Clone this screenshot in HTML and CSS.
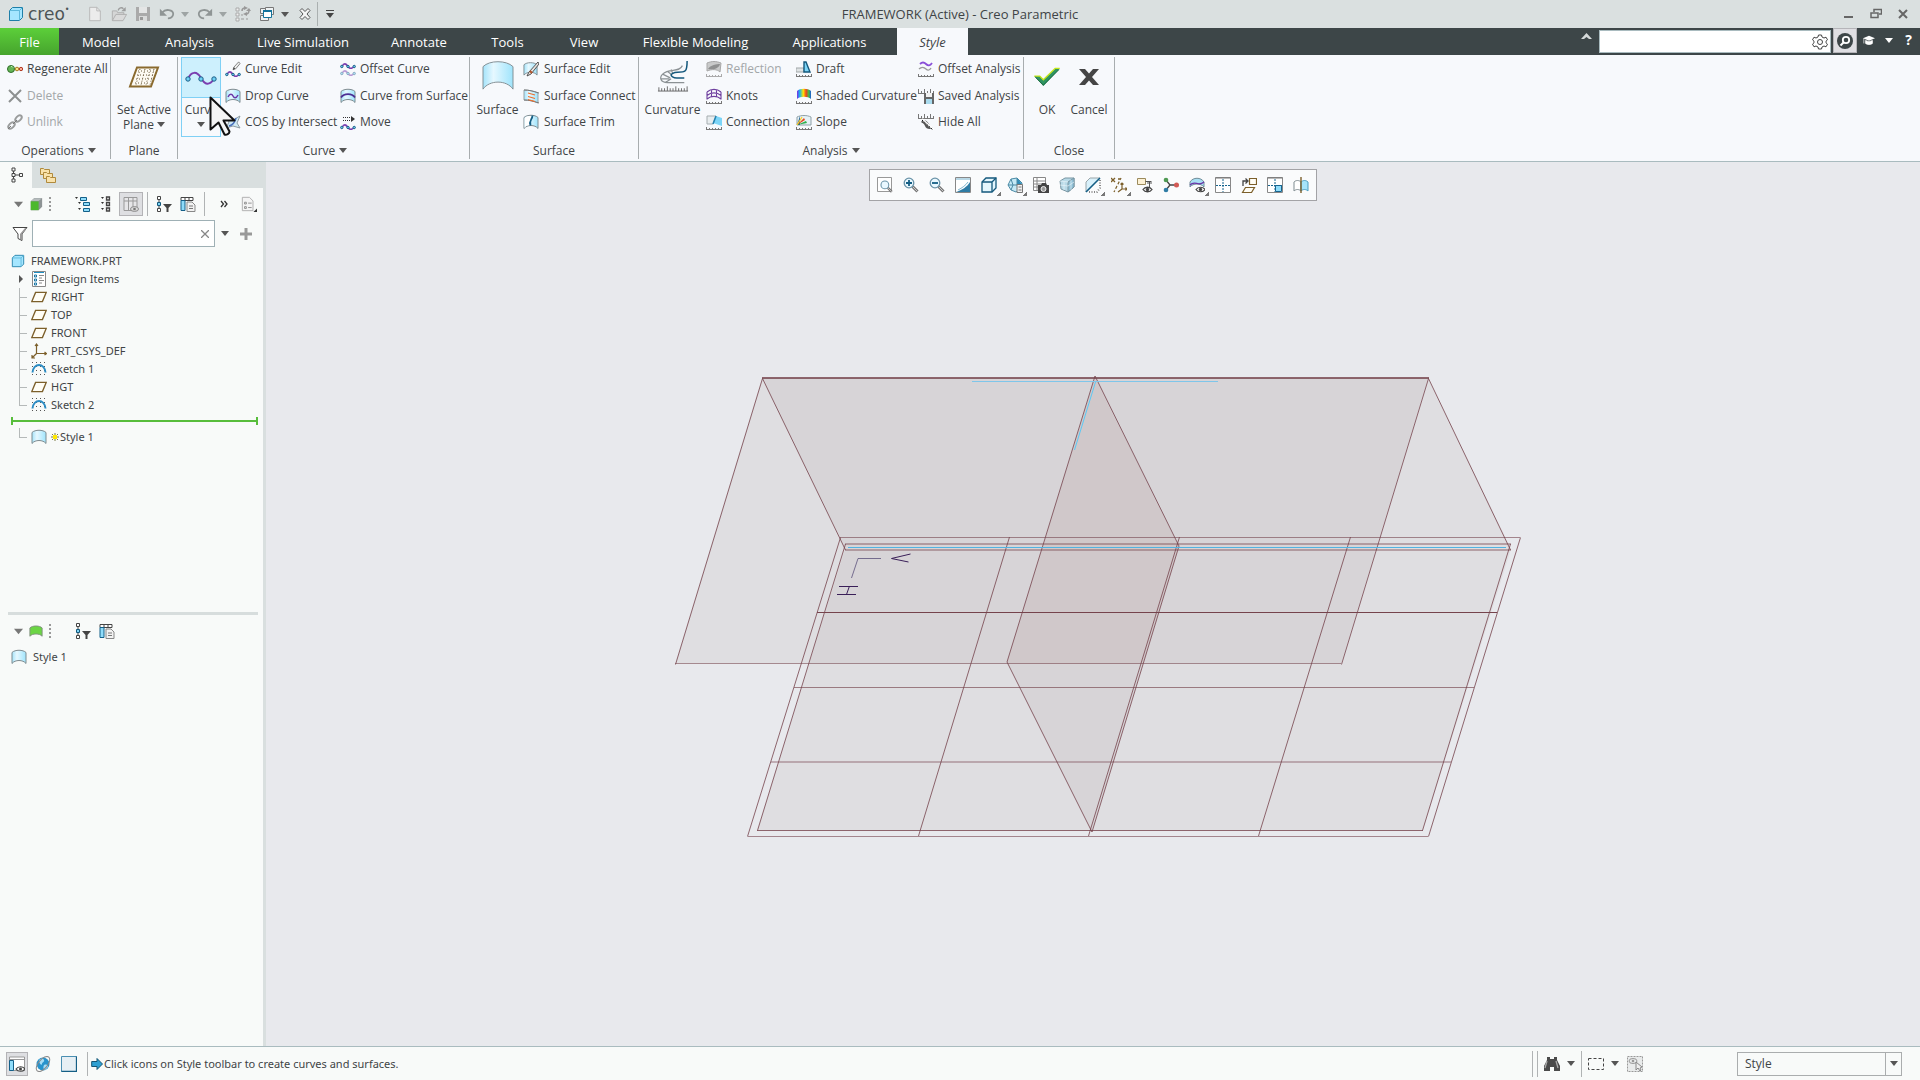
FILE: index.html
```html
<!DOCTYPE html>
<html lang="en">
<head>
<meta charset="utf-8">
<title>FRAMEWORK (Active) - Creo Parametric</title>
<link rel="stylesheet" href="styles.css">
</head>
<body>
<svg class="sprite" aria-hidden="true">
  <defs>
    <linearGradient id="sky" x1="0" x2="1"><stop offset="0" stop-color="#a5e4fb"/><stop offset=".35" stop-color="#e6f8ff"/><stop offset="1" stop-color="#9fe4fc"/></linearGradient>
    <linearGradient id="rainbow" x1="0" x2="1"><stop offset="0" stop-color="#7d2be8"/><stop offset=".2" stop-color="#16b7e8"/><stop offset=".45" stop-color="#ffe600"/><stop offset=".65" stop-color="#f4411e"/><stop offset=".85" stop-color="#39c24a"/><stop offset="1" stop-color="#1b52e0"/></linearGradient>
  </defs>
  <symbol id="caret" viewBox="0 0 8 5"><path d="M0 0h8L4 5z" fill="currentColor"/></symbol>
  <symbol id="cube" viewBox="0 0 16 16"><path d="M1.500 4.500l3-3h10v10l-3 3h-10z" fill="#a5e6ff" stroke="#1f7fa8"/><path d="M1.500 4.500h10v10M11.500 4.500l3-3" fill="none" stroke="#5fb9dc"/></symbol>
  <symbol id="greencube" viewBox="0 0 16 16"><path d="M2 5l4-4h9v10l-4 4H2z" fill="#8d9394"/><path d="M2 5h9v10H2z" fill="#4db82d"/><path d="M2 4.500l4-3h9l-4 3z" fill="#b5bbbc"/></symbol>
  <symbol id="new" viewBox="0 0 16 18"><path d="M2 1.500h8l4 4v11H2z" fill="#ececec" stroke="#b4b4b4"/><path d="M10 1.500v4h4" fill="none" stroke="#b4b4b4"/></symbol>
  <symbol id="open" viewBox="0 0 18 18"><path d="M1.500 16V5.500h5l1 2h7V10" fill="#d5d6d6" stroke="#adadad"/><path d="M1.500 16.500l4-7h12l-4 7z" fill="#dadada" stroke="#adadad"/><path d="M8 5c1-3 4-4 6-2" fill="none" stroke="#9d9d9d" stroke-width="1.500"/><path d="M16.500 1v5h-5z" fill="#9d9d9d"/></symbol>
  <symbol id="save" viewBox="0 0 16 16"><path d="M1 1h14v14H1z" fill="#aaa"/><path d="M4 1h8v6H4z" fill="#e4e5e5"/><path d="M4 10h8v5H4z" fill="#d9dada"/><path d="M5 11h3v3H5z" fill="#999"/></symbol>
  <symbol id="undo" viewBox="0 0 18 16"><path d="M4 6c3-4 12-3 12 2 0 3-3 5-6 5" fill="none" stroke="#8f9595" stroke-width="2"/><path d="M1 2v8h8z" fill="#8f9595"/></symbol>
  <symbol id="redo" viewBox="0 0 18 16"><path d="M14 6C11 2 2 3 2 8c0 3 3 5 6 5" fill="none" stroke="#8f9595" stroke-width="2"/><path d="M17 2v8H9z" fill="#8f9595"/></symbol>
  <symbol id="regen" viewBox="0 0 16 16"><path d="M1 2h3v3H1zM1 7h3v3H1zM1 12h3v3H1z" fill="#eee" stroke="#aaa"/><path d="M6 13h3M6 9h2M11 13h2" stroke="#999"/><path d="M7 5c0-2 1-3 3-3M14 4c0 3-1 4-3 4" fill="none" stroke="#999" stroke-width="1.500"/><path d="M9 0l4 2-4 2zM12 6l-4 2 4 2zM11 5l3-3 2 3z" fill="#999"/></symbol>
  <symbol id="windows" viewBox="0 0 16 16"><path d="M6.500 1.500h8v7h-8z" fill="#eef2f3" stroke="#777"/><path d="M1.500 2.500h5v5h-5zM1.500 9.500h8v5h-8z" fill="#eef2f3" stroke="#777"/><path d="M4.500 5h8v6.500h-8z" fill="#fff" stroke="#13739c"/><path d="M4 4h9v2H4z" fill="#13739c"/></symbol>
  <symbol id="xbox" viewBox="0 0 14 14"><path d="M2 3.500L4 1.500 7 4.500 10 1.500 12 3.500 9 7l3 3.500-2 2-3-3-3 3-2-2L5 7z" fill="#f4f4f4" stroke="#555"/></symbol>
  <symbol id="ruler" viewBox="0 0 16 4"><path d="M0 3.500h16M.5 1v3M3.500 2v2M6.500 2v2M9.500 2v2M12.500 2v2M15.500 1v3" stroke="#777" fill="none"/></symbol>
  <symbol id="beads" viewBox="0 0 16 16"><circle cx="4" cy="8" r="3.500" fill="#64b555" stroke="#2f6e28"/><path d="M4 5.500a2 2 0 0 1 2 1" stroke="#c5efbb" fill="none"/><circle cx="10" cy="8" r="1.800" fill="#fbe28a" stroke="#a97d1d"/><circle cx="14" cy="8" r="1.700" fill="#f9ab95" stroke="#b23a22"/></symbol>
  <symbol id="del" viewBox="0 0 16 16"><path d="M2 2l12 12M14 2L2 14" stroke="#8d9090" stroke-width="2"/></symbol>
  <symbol id="unlink" viewBox="0 0 16 16"><g fill="none" stroke="#9a9c9c" stroke-width="2"><ellipse cx="11.500" cy="4.500" rx="3.800" ry="2.300" transform="rotate(-45 11.500 4.500)"/><ellipse cx="4.500" cy="11.500" rx="3.800" ry="2.300" transform="rotate(-45 4.500 11.500)"/></g><path d="M6 10l4-4M1 15l3-3" stroke="#777"/></symbol>
  <symbol id="plane" viewBox="0 0 32 24"><path d="M9 2.500h21L23 21.500H2z" fill="#fdfaf2" stroke="#8a6a2e" stroke-width="2"/><path d="M10 6h16M9 10h16M8 14h16M7 18h15M12 4l-4 16M17 4l-4 16M22 4l-4 16M26 4l-4 16" stroke="#6b5a3a" stroke-dasharray="1 2" fill="none"/></symbol>
  <symbol id="curve" viewBox="0 0 32 14"><path d="M3 8C6 0 12 0 16 7s8 8 13 1" fill="none" stroke="#7b3fb0" stroke-width="2"/><g fill="#6fd0f5" stroke="#1c5e86"><circle cx="3" cy="8" r="2.200"/><circle cx="16" cy="8" r="2.200"/><circle cx="29" cy="8" r="2.200"/></g></symbol>
  <symbol id="wave" viewBox="0 0 16 6"><path d="M2 3.500c2-4 4-3 6 0s4 2 6 0" fill="none" stroke="#7b3fb0" stroke-width="1.600"/><g fill="#6fd0f5" stroke="#1c5e86"><circle cx="1.800" cy="3.500" r="1.200"/><circle cx="8" cy="3.500" r="1.200"/><circle cx="14.200" cy="3.500" r="1.200"/></g></symbol>
  <symbol id="surf" viewBox="0 0 16 16"><path d="M1 3.500C4 .5 12 .5 15 3.500V14.500C12 10.500 4 10.500 1 14.500z" fill="url(#sky)" stroke="#7f8b90"/></symbol>
  <symbol id="pen" viewBox="0 0 16 16"><path d="M14.500 1L9 7l-1 3 3-1 5-6z" fill="#eee" stroke="#555" stroke-width=".8"/><path d="M8 10l1-3 1.500 1.500z" fill="#333"/></symbol>
  <symbol id="curveedit" viewBox="0 0 16 16"><use href="#wave" y="10" width="16" height="6"/><use href="#pen" width="16" height="14"/></symbol>
  <symbol id="drop" viewBox="0 0 16 16"><use href="#surf" width="16" height="16"/><path d="M3 9c2-4 4-3 5-1s3 3 5-1" fill="none" stroke="#6b35a8" stroke-width="1.500"/></symbol>
  <symbol id="cos" viewBox="0 0 16 16"><path d="M1 2l7 4 7-4-3 7 3 5-7-2-7 2 3-6z" fill="#cfeaf5" stroke="#8d9ba1"/><path d="M4 12c4-1 6-4 7-8" fill="none" stroke="#4b72bd" stroke-width="1.500"/></symbol>
  <symbol id="offset" viewBox="0 0 16 16"><use href="#wave" y="2" width="16" height="6"/><use href="#wave" y="9" width="16" height="6" opacity=".5"/></symbol>
  <symbol id="fromsurf" viewBox="0 0 16 16"><use href="#surf" width="16" height="16"/><path d="M1 9.500C4 5 12 5 15 9.500" fill="none" stroke="#4c2f94" stroke-width="1.800"/></symbol>
  <symbol id="move" viewBox="0 0 16 16"><use href="#wave" y="10" width="16" height="6"/><path d="M3 3.500h8M3 6.500h8" stroke="#333" stroke-dasharray="1 1"/><path d="M11 2l4 3-4 3z" fill="#333"/></symbol>
  <symbol id="bigsurf" viewBox="0 0 34 32"><path d="M1 6C8-1 26-1 33 6V30C26 20 8 20 1 30z" fill="url(#sky)" stroke="#7f8b90"/></symbol>
  <symbol id="surfedit" viewBox="0 0 16 16"><use href="#surf" width="15" height="16"/><path d="M15 1L6 11l-2 4 4-2L16 3z" fill="#e9e3df" stroke="#444" stroke-width=".9"/><path d="M7 10l2 2" stroke="#b3532a" stroke-width="2"/></symbol>
  <symbol id="surfconn" viewBox="0 0 16 16"><path d="M1 2c5 0 9 1 14 3v10C10 13 6 12 1 12z" fill="url(#sky)" stroke="#98a3a7"/><path d="M1 2c5 0 9 1 15 3M1 12c5 0 9 1 15 3" stroke="#777" fill="none"/><path d="M5 5l7 2M5 8.500l7 2M5 11.500l7 2" stroke="#ef6e2a" stroke-width="1.300"/></symbol>
  <symbol id="surftrim" viewBox="0 0 16 16"><use href="#surf" width="16" height="16"/><path d="M1.500 4c2-2 4-2 8-2-1 4-3 4-2 9-3 0-5 1-6 3z" fill="#fff"/><path d="M9.500 1.500c0 4-4 5-2 10" fill="none" stroke="#145e85" stroke-width="1.800"/></symbol>
  <symbol id="curvature" viewBox="0 0 32 34"><g fill="none" stroke="#8b9194" stroke-width="1.300"><path d="M26 6c-4 8-14 2-21 9-4 4-2 9 5 9h18M5 15l8 4M3 20l9 0M10 12l5 4M14 10l2 5M8 24l6-4"/></g><path d="M31 1c0 12-2 12-10 12-5 0-7 2-7 3s2 3 6 3h8" fill="none" stroke="#14587c" stroke-width="1.600"/><path d="M0 33h32M1 29v4M4 30v3M7 30v3M10 28v5M13 30v3M16 30v3M19 28v5M22 30v3M25 30v3M28 30v3M31 28v5" stroke="#666" fill="none"/></symbol>
  <symbol id="reflection" viewBox="0 0 16 16"><path d="M1 2c5-2 9-2 14 0l-1 9c-3-3-8-3-13-1z" fill="#c9caca" stroke="#a7a7a7"/><path d="M2 8c2-4 9-5 12-5-1 4-5 6-12 5z" fill="#8f9090"/><use href="#ruler" y="12" width="16" height="4" opacity=".6"/></symbol>
  <symbol id="knots" viewBox="0 0 16 16"><path d="M1 4c4-3.500 10-3.500 14 0M1 7.500C5 4 11 4 15 7.500M1 11C5 7.500 11 7.500 15 11M1 4v7.500M5.500 1.500v8M10.500 1.500v8M15 4v7.500" fill="none" stroke="#6e3f9e" stroke-width="1.100"/><use href="#ruler" y="12" width="16" height="4"/></symbol>
  <symbol id="connection" viewBox="0 0 16 16"><path d="M1 2h9L7 10H1z" fill="#e8edef" stroke="#a5adb0"/><path d="M10 2l6 2v8L7 9z" fill="#7dd5f7"/><path d="M10 2L7 10" stroke="#2582b0" stroke-width="1.500"/><use href="#ruler" y="12" width="16" height="4"/></symbol>
  <symbol id="draft" viewBox="0 0 16 16"><path d="M0 7h8v4H0z" fill="#dfe3e4" stroke="#a1a7a9"/><path d="M8 1h2l4 10H8z" fill="#7dd5f7" stroke="#14587c" stroke-width="1.400"/><use href="#ruler" y="12" width="16" height="4"/></symbol>
  <symbol id="shaded" viewBox="0 0 16 16"><path d="M1 3c3-3 11-3 14 0v8c-3-3-11-3-14 0z" fill="url(#rainbow)"/><use href="#ruler" y="12" width="16" height="4"/></symbol>
  <symbol id="slope" viewBox="0 0 16 16"><path d="M1 3c4-2 10-2 14 0v8H1z" fill="#e5f2f7" stroke="#8fa0a7"/><path d="M1 11L4 2v9z" fill="#1a5e9c"/><path d="M1 11l7-7 1 2z" fill="#e8481f"/><path d="M1 11l9-4 1 2z" fill="#2eaf4d"/><path d="M1 11l5-8" stroke="#ffd028" stroke-width="1.300"/><use href="#ruler" y="12" width="16" height="4"/></symbol>
  <symbol id="offan" viewBox="0 0 16 16"><path d="M2 3c2-2 4-2 6 0s4 2 6-1" fill="none" stroke="#8a4fd8" stroke-width="1.800"/><path d="M1 8c2-2 5-2 7 0s4 1 5-1" fill="none" stroke="#999" stroke-width="1.300"/><use href="#ruler" y="12" width="16" height="4"/></symbol>
  <symbol id="rulertop" viewBox="0 0 16 5"><path d="M0 4.500h16M.5 0v5M3.500 2v3M6.500 0v5M9.500 2v3M12.500 0v5M15.500 2v3" stroke="#777" fill="none"/></symbol>
  <symbol id="savean" viewBox="0 0 16 16"><use href="#rulertop" y="1" width="16" height="5"/><path d="M6 5h10v11H6z" fill="#666"/><path d="M8 5h6v4H8z" fill="#f2f2f2"/><path d="M8 11h6v5H8z" fill="#a9dbee"/></symbol>
  <symbol id="hide" viewBox="0 0 16 16"><use href="#rulertop" width="16" height="5"/><path d="M3 8c2-3 6-2 8 2s3 3 4 4c-3 2-7 1-8-2S4 9 3 8z" fill="#555"/><path d="M4 5l12 11" stroke="#fff" stroke-width="2"/><path d="M4 6l11 10" stroke="#111" stroke-dasharray="2 1"/></symbol>
  <symbol id="ok" viewBox="0 0 28 22"><path d="M0 10h6l4 4L23 2h5L10 21z" fill="#2f9462"/><path d="M0 10h6l4 4L23 1.500h5" fill="none" stroke="#c4e617" stroke-width="1.500"/><path d="M1 11l9 9L27 3" fill="none" stroke="#166238"/></symbol>
  <symbol id="cancel" viewBox="0 0 20 16"><path d="M0 0h6l4 4.500L14 0h6l-7 8 7 8h-6l-4-4.500L6 16H0l7-8z" fill="#454545"/></symbol>
  <symbol id="gear" viewBox="0 0 16 16"><path d="M6.500 1h3l.5 2 2 1 2-.8 1.500 2.600L14 7.200v1.600l1.500 1.400-1.500 2.600-2-.8-2 1-.5 2h-3L6 13l-2-1-2 .8L.5 10.200 2 8.800V7.200L.5 5.800 2 3.200 4 4l2-1z" fill="#fff" stroke="#444"/><circle cx="8" cy="8" r="2.500" fill="#fff" stroke="#444"/></symbol>
  <symbol id="find" viewBox="0 0 16 16"><circle cx="8" cy="8" r="8" fill="#3d4648"/><circle cx="9" cy="7" r="3.200" fill="none" stroke="#fff" stroke-width="1.800"/><path d="M3.500 12.500L7 9" stroke="#fff" stroke-width="2"/></symbol>
  <symbol id="grad" viewBox="0 0 14 12"><path d="M7 1l7 3-7 3-7-3z" fill="#fff"/><path d="M3 6.500V10c2 1.800 6 1.800 8 0V6.500L7 8zM1 4v6" fill="#fff" stroke="#fff" stroke-width=".8"/></symbol>
  <symbol id="treetab" viewBox="0 0 14 16"><path d="M2 1h3v3H2zM2 6.500h3v3H2zM2 12h3v3H2zM9.500 6.500h3v3h-3zM3.500 4v2.500M3.500 9.500V12M5 8h4.500" fill="none" stroke="#444"/></symbol>
  <symbol id="folders" viewBox="0 0 16 16"><g fill="#f9e2ab" stroke="#b08a3c"><path d="M.5 1.500h3l1 1h5v5h-9z"/><path d="M3.500 5.500h3l1 1h5v5h-9z"/><path d="M6.500 9.500h3l1 1h5v5h-9z"/></g></symbol>
  <symbol id="expand" viewBox="0 0 16 16"><path d="M0 1h3L1.500 3zM3 6h3L4.500 8zM3 12h3l-1.500 2z" fill="#333"/><path d="M5.500 1.500h6v3h-6zM8.500 6.500h6v3h-6zM8.500 12.500h6v3h-6z" fill="#8fdcfa" stroke="#146089"/></symbol>
  <symbol id="collapse" viewBox="0 0 16 16"><path d="M2 1h3L3.500 3zM2 6h3L3.500 8zM2 12h3l-1.500 2z" fill="#333"/><path d="M7.500 1h3v3h-3zM7.500 6.500h3v3h-3zM7.500 12h3v3h-3z" fill="#ddd" stroke="#444" stroke-width="1.300"/></symbol>
  <symbol id="cols" viewBox="0 0 16 16"><path d="M1 1.500h13v13H1zM1 5h13M5.500 1.500v13M10 1.500v13" fill="#e6e6e8" stroke="#999"/><ellipse cx="11.500" cy="13" rx="4" ry="2.400" fill="#ddd" stroke="#888"/><circle cx="11.500" cy="13" r="1.300" fill="#777"/></symbol>
  <symbol id="treefilter" viewBox="0 0 16 16"><path d="M1.500 .5h3v3h-3zM1.500 12.500h3v3h-3zM3 3.500v9" fill="#fff" stroke="#444"/><path d="M1.500 6.500h3v3h-3z" fill="#7dd5f7" stroke="#14587c"/><path d="M7 8h9l-3.500 4v4h-2v-4z" fill="#444"/></symbol>
  <symbol id="treecols" viewBox="0 0 16 16"><path d="M1 1.500h12v3H1zM5 1.500v3M9 1.500v3" fill="#fff" stroke="#444"/><path d="M1 4.500h4v10H1z" fill="#8fdcfa" stroke="#146089"/><path d="M7 6h5l3 3v6.500H7z" fill="#f2f2f2" stroke="#888"/><path d="M9 10h4M9 12.500h4" stroke="#777"/></symbol>
  <symbol id="page" viewBox="0 0 18 18"><path d="M1.500 1.500h8l4 4v11h-12z" fill="#f4f4f4" stroke="#aaa"/><path d="M4 7h2v2H4zM4 12h2v2H4zM8 8h4M8 13h4" fill="none" stroke="#888"/><path d="M18 14v4h-4z" fill="#333"/></symbol>
  <symbol id="funnel" viewBox="0 0 16 16"><path d="M1 1.500h14L10 8v6.500l-4-2V8z" fill="#fff" stroke="#444"/><path d="M8 8l5-6h2l-5 6v6l-2-1z" fill="#999"/></symbol>
  <symbol id="plus" viewBox="0 0 12 12"><path d="M4.500 0h3v4.500H12v3H7.500V12h-3V7.500H0v-3h4.500z" fill="#999"/></symbol>
  <symbol id="design" viewBox="0 0 14 16"><path d="M.5 .5h13v15H.5z" fill="#fff" stroke="#888"/><path d="M2 1.500h10" stroke="#1f8fc4"/><path d="M2.500 4h2v2h-2zM2.500 8h2v2h-2zM2.500 12h2v2h-2z" fill="#fff" stroke="#1976a5"/><path d="M7 4.500h5M7 7h3M7 9.500h5M7 12h3" stroke="#888"/></symbol>
  <symbol id="datum" viewBox="0 0 14 10"><path d="M4 1h9.300L10 9H.7z" fill="#fffdf5" stroke="#7c5f2a" stroke-width="1.200"/></symbol>
  <symbol id="csys" viewBox="0 0 16 16"><path d="M5.500 1v9.500h10M5.500 10.500L1 15M4 3l1.500-2L7 3M13.500 9l2 1.500-2 1.500M1 12v3h3" fill="none" stroke="#7c5f2a" stroke-width="1.200"/></symbol>
  <symbol id="sketch" viewBox="0 0 16 14"><path d="M1 .5h14M1 4.500h14M1 8.500h14M1 12.500h14" stroke="#555" stroke-dasharray="1 3"/><path d="M1.500 10.500c1-10 12-10 13 0" fill="none" stroke="#2b8cc4" stroke-width="2"/></symbol>
  <symbol id="star" viewBox="0 0 8 8"><path d="M4 0v8M0 4h8M1 1l6 6M7 1L1 7" stroke="#5b5b1c" stroke-width=".8"/><path d="M2 2h4v4H2z" fill="#ffe800"/></symbol>
  <symbol id="mag" viewBox="0 0 16 16"><path d="M9.500 9.500l5 5" stroke="#777" stroke-width="3"/><path d="M10 10l4.500 4.500" stroke="#ccc"/><circle cx="6" cy="6" r="4.800" fill="#e9f8ff" stroke="#6a93a8" stroke-width="1.300"/></symbol>
  <symbol id="refit" viewBox="0 0 16 16"><path d="M.5 .5h14v14H.5z" fill="#fff" stroke="#999"/><use href="#mag" x="3" y="3" width="13" height="13"/></symbol>
  <symbol id="zin" viewBox="0 0 16 16"><use href="#mag" width="16" height="16"/><path d="M3 6h6M6 3v6" stroke="#145e85" stroke-width="1.800"/></symbol>
  <symbol id="zout" viewBox="0 0 16 16"><use href="#mag" width="16" height="16"/><path d="M3 6h6" stroke="#145e85" stroke-width="1.800"/></symbol>
  <symbol id="repaint" viewBox="0 0 16 16"><path d="M.5 .5h15v15H.5z" fill="#fff" stroke="#888"/><path d="M1 15c6-2 11-5 14-10v10z" fill="#2f7ca5"/><path d="M1 1h14v2H1z" fill="#b9d8e6"/><path d="M3 13c4-2 8-5 10-8" stroke="#7fb6d0" fill="none"/></symbol>
  <symbol id="box3d" viewBox="0 0 16 16"><path d="M1 5l4-4h10v10l-4 4H1z" fill="#e4f6fd" stroke="#14587c" stroke-width="1.300"/><path d="M1 5h10v10M11 5l4-4" fill="none" stroke="#14587c" stroke-width="1.300"/></symbol>
  <symbol id="saved" viewBox="0 0 16 16"><path d="M4 2l6-1 5 5-1 6-5 3-5-2-3-5z" fill="#c5e9f6" stroke="#4b8aa5"/><path d="M10 1l5 6h-5z" fill="#2f8cb8"/><path d="M1 8h9V1M4 13l2-5-2-6" stroke="#4b8aa5" fill="none"/><path d="M10 7.500h5.500v8H10z" fill="#f1f1f1" stroke="#777"/><path d="M11.500 10h3M11.500 13h3" stroke="#777"/></symbol>
  <symbol id="viewmgr" viewBox="0 0 16 16"><path d="M.5 .5h12v13H.5zM.5 4h12M.5 7h12M.5 10h12M4 .5v13" fill="#fff" stroke="#888"/><path d="M5 8h3l1-2h4l1 2h2v8H5z" fill="#444"/><circle cx="10.500" cy="12" r="2.500" fill="#999" stroke="#eee"/></symbol>
  <symbol id="persp" viewBox="0 0 16 16"><path d="M1 4l5-3h9v9l-6 5-7-3z" fill="#b7d9e7" stroke="#7895a2"/><path d="M9 5l6-4v9l-6 5z" fill="#8fc0d6" stroke="#7895a2"/><path d="M1 4l8 1M5 5v8M1 8l8 1 6-4M12 3v10" fill="none" stroke="#e7f4f9" stroke-width=".7"/></symbol>
  <symbol id="section" viewBox="0 0 16 16"><path d="M1 5l4-4h10L1 15z" fill="#d9f1fb" stroke="#9aa5a9"/><path d="M4 15h8l3-4V3" fill="none" stroke="#888" stroke-dasharray="1 1.500" stroke-width="2"/><path d="M1 15L15 1" stroke="#145e85" stroke-width="1.600"/></symbol>
  <symbol id="datums" viewBox="0 0 16 16"><g stroke="#7c5f2a" fill="none" stroke-width="1.400"><path d="M0 1l4 4M4 1L0 5M10 1L3 15" stroke-width="1.300"/><path d="M10 1L3 15" stroke="#fafbfc" stroke-width="2" stroke-dasharray="2 3" stroke-dashoffset="3"/><path d="M7 2h2"/><path d="M11 6v6h5M11 12l-4 3M9.500 7.500L11 6l1.500 1.500M14.500 10.500L16 12l-1.500 1.500" stroke-width="1.200"/></g></symbol>
  <symbol id="annot" viewBox="0 0 16 16"><path d="M.5 1.500h8v6h-8z" fill="#fdf1d4" stroke="#9b8a5c"/><path d="M8.500 4.500h6M12.500 5v5M10 6l5 0" stroke="#555" fill="none"/><path d="M6 12.500c2-3 7-3 9 0-2 3-7 3-9 0z" fill="#fff" stroke="#444" stroke-width="1.300"/><circle cx="10.500" cy="12.500" r="1.700" fill="#444"/></symbol>
  <symbol id="spin" viewBox="0 0 16 16"><path d="M3 3l4 5-4 5M7 8h6" fill="none" stroke="#444" stroke-width="1.300"/><circle cx="3" cy="3" r="2.300" fill="#4f9a53"/><circle cx="3" cy="13" r="2.300" fill="#2f7ca5"/><circle cx="13.500" cy="8" r="2.500" fill="#d25b56"/></symbol>
  <symbol id="styledisp" viewBox="0 0 16 16"><path d="M1 5C4 0 12 0 15 5v5C12 6 4 6 1 10z" fill="#a8dff4" stroke="#708d99"/><path d="M1 8c5-5 8 2 14-3" fill="none" stroke="#6b35a8" stroke-width="1.300"/><path d="M7 12.500c2-3 7-3 9 0-2 3-7 3-9 0z" fill="#fff" stroke="#444" stroke-width="1.200"/><circle cx="11.500" cy="12.500" r="1.700" fill="#444"/></symbol>
  <symbol id="grid4" viewBox="0 0 16 16"><path d="M.5 .5h15v15H.5z" fill="#fff" stroke="#888"/><path d="M.5 1h15" stroke="#777"/><path d="M8 2v13M1 8.500h14" stroke="#17648e" stroke-dasharray="2 1"/></symbol>
  <symbol id="orient" viewBox="0 0 16 16"><path d="M8.500 1.500h7v6h-7zM4.500 10.500h9l-3 5h-9z" fill="#fffdf5" stroke="#7c5f2a" stroke-width="1.200"/><path d="M2 9V4h4M4.500 1.500L7 4 4.500 6.500" fill="none" stroke="#444" stroke-width="1.300"/></symbol>
  <symbol id="grid4b" viewBox="0 0 16 16"><use href="#grid4" width="16" height="16"/><path d="M8.500 8.500h6v6h-6z" fill="#8fdcfa" stroke="#17648e"/></symbol>
  <symbol id="mirror" viewBox="0 0 16 16"><path d="M8 5C6 3 3 3 1 5v9c2-2 5-2 7 0z" fill="#fff" stroke="#7f8b90"/><path d="M8 5c2-2 5-2 7 0v9c-2-2-5-2-7 0z" fill="#a5e4fb" stroke="#4b9dbf"/><path d="M8 0v16" stroke="#7c5f2a" stroke-width="1.400"/></symbol>
  <symbol id="greensurf" viewBox="0 0 16 14"><path d="M1 3.500C4 .5 12 .5 15 3.500V13C12 9.500 4 9.500 1 13z" fill="#6bd544" stroke="#7f8b80"/></symbol>
  <symbol id="nav" viewBox="0 0 16 16"><path d="M.5 1h15v13.500H.5z" fill="#fff" stroke="#999"/><path d="M.5 3.500h15" stroke="#999"/><path d="M.5 4.500h4v10h-4z" fill="#8fdcfa" stroke="#146089"/><path d="M7 13c2-3 7-3 9 0-2 3-7 3-9 0z" fill="#fff" stroke="#444" stroke-width="1.200"/><circle cx="11.500" cy="13" r="1.500" fill="#444"/></symbol>
  <symbol id="globe" viewBox="0 0 16 16"><circle cx="8" cy="8" r="6.500" fill="#2793cc"/><path d="M4 4c2-2 4-2 5 0s-2 2-2 4-3 0-3-4zM9 9c3-1 4 0 4 2l-3 3c-2-1-2-3-1-5z" fill="#a5dcf5"/><ellipse cx="8" cy="8" rx="9" ry="4.500" transform="rotate(-50 8 8)" fill="none" stroke="#888"/></symbol>
  <symbol id="blank" viewBox="0 0 16 16"><path d="M.5 .5h15v15H.5z" fill="#e6eff4" stroke="#4a8fb2"/><path d="M.5 15.500h15V.5" fill="none" stroke="#145e85" stroke-width="1.300"/></symbol>
  <symbol id="arrow" viewBox="0 0 12 12"><path d="M.7 3.500H6v-3L11.500 6 6 11.500v-3H.7z" fill="#2d9fd2" stroke="#145473"/></symbol>
  <symbol id="binoc" viewBox="0 0 16 16"><path d="M3 1h3v2h4V1h3v3l3 6v5h-6v-4H6v4H0v-5l3-6z" fill="#4a4a4a"/><path d="M3 5L1 12M12 5l2 7" stroke="#aaa" stroke-width="1.300"/></symbol>
  <symbol id="marquee" viewBox="0 0 16 12"><path d="M.5 .5h15v11H.5z" fill="none" stroke="#444" stroke-dasharray="3 2"/></symbol>
  <symbol id="pick" viewBox="0 0 16 16"><path d="M.5 .5h15v15H.5z" fill="#e9ebeb" stroke="#999" stroke-dasharray="2 1"/><ellipse cx="6" cy="5" rx="4" ry="2.500" fill="none" stroke="#999"/><circle cx="6" cy="5" r="1.300" fill="#999"/><path d="M9 6v8l2-2 2 3 1-1-1-2 2-1z" fill="#eee" stroke="#888"/></symbol>
</svg>

<header class="titlebar">
  <div class="quick">
    <svg class="i16"><use href="#cube"/></svg>
    <span class="logo">creo<sup>•</sup></span>
    <button class="qb" aria-label="New" disabled><svg class="i16"><use href="#new"/></svg></button>
    <button class="qb" aria-label="Open" disabled><svg class="i16"><use href="#open"/></svg></button>
    <button class="qb" aria-label="Save" disabled><svg class="i16"><use href="#save"/></svg></button>
    <button class="qb wide" aria-label="Undo" disabled><svg class="i16"><use href="#undo"/></svg><svg class="caret dim"><use href="#caret"/></svg></button>
    <button class="qb wide" aria-label="Redo" disabled><svg class="i16"><use href="#redo"/></svg><svg class="caret dim"><use href="#caret"/></svg></button>
    <button class="qb" aria-label="Regenerate" disabled><svg class="i16"><use href="#regen"/></svg></button>
    <button class="qb wide" aria-label="Windows"><svg class="i16"><use href="#windows"/></svg><svg class="caret"><use href="#caret"/></svg></button>
    <button class="qb" aria-label="Close window"><svg class="i14"><use href="#xbox"/></svg></button>
    <span class="qsep"></span>
    <button class="qb" aria-label="Customize"><svg class="i8" viewBox="0 0 8 8"><path d="M0 .5h8" stroke="#444"/><path d="M0 3h8L4 8z" fill="#444"/></svg></button>
  </div>
  <h1 class="title">FRAMEWORK (Active) - Creo Parametric</h1>
  <div class="winctl">
    <button aria-label="Minimize"><svg class="i12" viewBox="0 0 12 12"><path d="M1 9h9" stroke="#666" stroke-width="2"/></svg></button>
    <button aria-label="Restore"><svg class="i12" viewBox="0 0 12 12"><path d="M4 4V1.500h7.500V6H9" fill="none" stroke="#666" stroke-width="1.500"/><path d="M1 5h7v4.500H1z" fill="none" stroke="#666" stroke-width="1.500"/></svg></button>
    <button aria-label="Close"><svg class="i12" viewBox="0 0 12 12"><path d="M2 2l8 8M10 2l-8 8" stroke="#666" stroke-width="2"/></svg></button>
  </div>
</header>

<nav class="tabs">
  <div class="tablist">
    <a class="file" href="#file">File</a><a href="#model">Model</a><a href="#analysis">Analysis</a><a href="#live">Live Simulation</a><a href="#annotate">Annotate</a><a href="#tools">Tools</a><a href="#view">View</a><a href="#flex">Flexible Modeling</a><a href="#apps">Applications</a><a class="active" href="#style">Style</a>
  </div>
  <div class="finder">
    <button class="bare up" aria-label="Collapse ribbon"><svg class="i12" viewBox="0 0 12 12"><path d="M0 8l5.500-6L11 8H8L5.500 6 3 8z" fill="#d5d9d9"/></svg></button>
    <div class="search"><input type="text" aria-label="Search commands"><svg class="i16"><use href="#gear"/></svg></div>
    <button class="findbtn" aria-label="Find"><svg class="i16"><use href="#find"/></svg></button>
    <button class="bare" aria-label="Learning"><svg class="i12"><use href="#grad"/></svg><svg class="caret"><use href="#caret"/></svg></button>
    <button class="bare help" aria-label="Help">?</button>
  </div>
</nav>

<section class="ribbon">
  <div class="group g-ops">
    <div class="tools">
      <div class="col">
        <button class="cmd"><svg class="i16"><use href="#beads"/></svg>Regenerate All</button>
        <button class="cmd" disabled><svg class="i16"><use href="#del"/></svg>Delete</button>
        <button class="cmd" disabled><svg class="i16"><use href="#unlink"/></svg>Unlink</button>
      </div>
    </div>
    <div class="label">Operations <svg class="caret"><use href="#caret"/></svg></div>
  </div>
  <div class="group g-plane">
    <div class="tools">
      <button class="big"><span class="pic"><svg class="w32h24"><use href="#plane"/></svg></span><span>Set Active<br>Plane <svg class="caret"><use href="#caret"/></svg></span></button>
    </div>
    <div class="label">Plane</div>
  </div>
  <div class="group g-curve">
    <div class="tools">
      <button class="big hot"><span class="pic"><svg class="w32h14"><use href="#curve"/></svg></span><span>Curve<br><svg class="caret"><use href="#caret"/></svg></span></button>
      <div class="col">
        <button class="cmd"><svg class="i16"><use href="#curveedit"/></svg>Curve Edit</button>
        <button class="cmd"><svg class="i16"><use href="#drop"/></svg>Drop Curve</button>
        <button class="cmd"><svg class="i16"><use href="#cos"/></svg>COS by Intersect</button>
      </div>
      <div class="col">
        <button class="cmd"><svg class="i16"><use href="#offset"/></svg>Offset Curve</button>
        <button class="cmd"><svg class="i16"><use href="#fromsurf"/></svg>Curve from Surface</button>
        <button class="cmd"><svg class="i16"><use href="#move"/></svg>Move</button>
      </div>
    </div>
    <div class="label">Curve <svg class="caret"><use href="#caret"/></svg></div>
    <svg class="cursor" viewBox="0 0 28 42" aria-hidden="true"><path d="M1.500 1.500v32l8-7 6 12c2 1 5-1 5-3l-6-11h11z" fill="#f4f4f4" stroke="#111" stroke-width="2" stroke-linejoin="round"/></svg>
  </div>
  <div class="group g-surf">
    <div class="tools">
      <button class="big"><span class="pic"><svg class="w32h30"><use href="#bigsurf"/></svg></span><span>Surface</span></button>
      <div class="col">
        <button class="cmd"><svg class="i16"><use href="#surfedit"/></svg>Surface Edit</button>
        <button class="cmd"><svg class="i16"><use href="#surfconn"/></svg>Surface Connect</button>
        <button class="cmd"><svg class="i16"><use href="#surftrim"/></svg>Surface Trim</button>
      </div>
    </div>
    <div class="label">Surface</div>
  </div>
  <div class="group g-ana">
    <div class="tools">
      <button class="big"><span class="pic"><svg class="w32h32"><use href="#curvature"/></svg></span><span>Curvature</span></button>
      <div class="col">
        <button class="cmd" disabled><svg class="i16"><use href="#reflection"/></svg>Reflection</button>
        <button class="cmd"><svg class="i16"><use href="#knots"/></svg>Knots</button>
        <button class="cmd"><svg class="i16"><use href="#connection"/></svg>Connection</button>
      </div>
      <div class="col">
        <button class="cmd"><svg class="i16"><use href="#draft"/></svg>Draft</button>
        <button class="cmd"><svg class="i16"><use href="#shaded"/></svg>Shaded Curvature</button>
        <button class="cmd"><svg class="i16"><use href="#slope"/></svg>Slope</button>
      </div>
      <div class="col">
        <button class="cmd"><svg class="i16"><use href="#offan"/></svg>Offset Analysis</button>
        <button class="cmd"><svg class="i16"><use href="#savean"/></svg>Saved Analysis</button>
        <button class="cmd"><svg class="i16"><use href="#hide"/></svg>Hide All</button>
      </div>
    </div>
    <div class="label">Analysis <svg class="caret"><use href="#caret"/></svg></div>
  </div>
  <div class="group g-close">
    <div class="tools">
      <button class="big"><span class="pic"><svg class="w28h20"><use href="#ok"/></svg></span><span>OK</span></button>
      <button class="big"><span class="pic"><svg class="w20h16"><use href="#cancel"/></svg></span><span>Cancel</span></button>
    </div>
    <div class="label">Close</div>
  </div>
</section>

<main class="work">
  <aside class="side">
    <div class="sidetabs">
      <button class="on" aria-label="Model tree"><svg class="i16"><use href="#treetab"/></svg></button>
      <button aria-label="Folders"><svg class="i16"><use href="#folders"/></svg></button>
    </div>
    <div class="treebar">
      <button aria-label="Collapse section"><svg class="tri"><use href="#caret"/></svg></button>
      <svg class="i14"><use href="#greencube"/></svg><span class="grip"></span>
      <button class="gapl" aria-label="Expand all"><svg class="i16"><use href="#expand"/></svg></button>
      <button aria-label="Collapse all"><svg class="i16"><use href="#collapse"/></svg></button>
      <button class="pressed" aria-label="Show columns"><svg class="i16"><use href="#cols"/></svg></button>
      <span class="vsep"></span>
      <button aria-label="Tree filters"><svg class="i16"><use href="#treefilter"/></svg></button>
      <button aria-label="Tree columns"><svg class="i16"><use href="#treecols"/></svg></button>
      <span class="vsep"></span>
      <button class="more" aria-label="More"><svg class="i8" viewBox="0 0 8 8"><path d="M1 1l2.500 3L1 7M4.500 1L7 4 4.500 7" fill="none" stroke="#333" stroke-width="1.300"/></svg></button>
      <button class="settings" aria-label="Settings"><svg class="i16"><use href="#page"/></svg></button>
    </div>
    <div class="filter">
      <svg class="i16"><use href="#funnel"/></svg>
      <div class="box"><input type="text" aria-label="Filter tree"><button aria-label="Clear"><svg class="i8" viewBox="0 0 8 8"><path d="M0 0l8 8M8 0L0 8" stroke="#888" stroke-width="1.300"/></svg></button></div>
      <button aria-label="Filter options"><svg class="caret"><use href="#caret"/></svg></button>
      <button aria-label="Add"><svg class="i12"><use href="#plus"/></svg></button>
    </div>
    <ul class="tree">
      <li class="root"><svg class="i14"><use href="#cube"/></svg>FRAMEWORK.PRT</li>
      <li><span class="twig open"><svg class="i8" viewBox="0 0 8 8"><path d="M0 0l4 4-4 4z" fill="#555"/></svg></span><svg class="i16"><use href="#design"/></svg>Design Items</li>
      <li><span class="twig"></span><svg class="i16 flat"><use href="#datum"/></svg>RIGHT</li>
      <li><span class="twig"></span><svg class="i16 flat"><use href="#datum"/></svg>TOP</li>
      <li><span class="twig"></span><svg class="i16 flat"><use href="#datum"/></svg>FRONT</li>
      <li><span class="twig"></span><svg class="i16"><use href="#csys"/></svg>PRT_CSYS_DEF</li>
      <li><span class="twig"></span><svg class="i16"><use href="#sketch"/></svg>Sketch 1</li>
      <li><span class="twig"></span><svg class="i16 flat"><use href="#datum"/></svg>HGT</li>
      <li><span class="twig last"></span><svg class="i16"><use href="#sketch"/></svg>Sketch 2</li>
    </ul>
    <div class="insert"></div>
    <ul class="tree after">
      <li><span class="twig last"></span><svg class="i16"><use href="#surf"/></svg><span class="fresh"><svg class="i8"><use href="#star"/></svg>Style 1</span></li>
    </ul>
    <div class="split"></div>
    <div class="treebar second">
      <button aria-label="Collapse section"><svg class="tri"><use href="#caret"/></svg></button>
      <svg class="i14"><use href="#greensurf"/></svg><span class="grip"></span>
      <button class="gapl" aria-label="Style tree filters"><svg class="i16"><use href="#treefilter"/></svg></button>
      <button aria-label="Style tree columns"><svg class="i16"><use href="#treecols"/></svg></button>
    </div>
    <ul class="tree">
      <li class="root"><svg class="i16"><use href="#surf"/></svg>Style 1</li>
    </ul>
  </aside>

  <section class="canvas">
    <div class="viewbar">
      <button aria-label="Refit"><svg class="i16"><use href="#refit"/></svg></button>
      <button aria-label="Zoom in"><svg class="i16"><use href="#zin"/></svg></button>
      <button aria-label="Zoom out"><svg class="i16"><use href="#zout"/></svg></button>
      <button aria-label="Repaint"><svg class="i16"><use href="#repaint"/></svg></button>
      <button class="drop" aria-label="Display style"><svg class="i16"><use href="#box3d"/></svg></button>
      <button class="drop" aria-label="Saved orientations"><svg class="i16"><use href="#saved"/></svg></button>
      <button aria-label="View manager"><svg class="i16"><use href="#viewmgr"/></svg></button>
      <button aria-label="Perspective view"><svg class="i16"><use href="#persp"/></svg></button>
      <button class="drop" aria-label="Section"><svg class="i16"><use href="#section"/></svg></button>
      <button class="drop" aria-label="Datum display"><svg class="i16"><use href="#datums"/></svg></button>
      <button aria-label="Annotation display"><svg class="i16"><use href="#annot"/></svg></button>
      <button aria-label="Spin center"><svg class="i16"><use href="#spin"/></svg></button>
      <button class="drop" aria-label="Style display"><svg class="i16"><use href="#styledisp"/></svg></button>
      <button aria-label="Show all views"><svg class="i16"><use href="#grid4"/></svg></button>
      <button aria-label="Active plane orientation"><svg class="i16"><use href="#orient"/></svg></button>
      <button aria-label="Set active view"><svg class="i16"><use href="#grid4b"/></svg></button>
      <button aria-label="Mirror"><svg class="i16"><use href="#mirror"/></svg></button>
    </div>
    <svg class="model" viewBox="646 360 894 490" role="img" aria-label="Datum planes and active style plane grid">
      <g fill="rgb(144,126,130)" fill-opacity=".1">
        <path d="M762 378H1428L1341 664H675z"/>
        <path d="M762 378H1428L1511 549H845z"/>
        <path d="M845 549H1511L1423 830H757z"/>
        <path d="M1095 376L1179 546 1092 832 1007 662z"/>
      </g>
      <path d="M1095 378L1179 547 1143 664H1008L1007 662z" fill="rgb(230,120,140)" fill-opacity=".04"/>
      <g fill="none" stroke="#75434c" stroke-opacity=".8">
        <path d="M762.500 378.500L675.500 664.500M1428.500 378.500L1341.500 664.500"/>
        <path d="M675 663.500H1341" stroke-opacity=".55"/>
        <path d="M762 378H1429" stroke-width="2"/>
        <path d="M762.500 378.500L845.500 550M1428.500 378.500L1510.500 550"/>
        <path d="M840 537.500H1520" stroke-opacity=".6"/>
        <path d="M845 544H1511M845 550H1511" stroke-width="2" stroke-opacity=".4"/>
        <path d="M845.500 544L757.500 830.500M1510.500 544L1422.500 830.500"/>
        <path d="M757 830.500H1423"/>
        <path d="M840.500 537.500L747.500 836.500M1520.500 537.500L1428.500 836.500"/>
        <path d="M748 836.500H1428" stroke-opacity=".6"/>
        <path d="M1009.500 537L918.500 836M1179.500 537L1088.500 836M1350.500 537L1258.500 836"/>
        <path d="M817 612.500H1497" stroke-opacity="1"/>
        <path d="M794 687.500H1474" stroke-opacity=".65"/>
        <path d="M771 762H1451" stroke-width="2" stroke-opacity=".35"/>
        <path d="M1095 376L1179 546 1092 832 1007 662z"/>
      </g>
      <path d="M972 381.500H1218" stroke="#7fc6ea" fill="none"/>
      <path d="M1095.500 382L1074.500 450" stroke="#5bc8f5" fill="none"/>
      <path d="M848 547.500H1506" stroke="#52b2e0" fill="none"/>
      <path d="M881 558.500H858L851.500 578" stroke="#5c527c" fill="none" stroke-opacity=".8"/>
      <path d="M910.500 554L891.500 558.500 908.500 562M839 586.500h19M837 594.500h19M849.500 586L846.500 594.500" stroke="#3a1f58" fill="none"/>
    </svg>
  </section>
</main>

<footer class="status">
  <button class="pressed" aria-label="Navigator"><svg class="i16"><use href="#nav"/></svg></button>
  <button aria-label="Browser"><svg class="i16"><use href="#globe"/></svg></button>
  <button aria-label="Full screen"><svg class="i16"><use href="#blank"/></svg></button>
  <span class="vsep"></span>
  <p class="msg"><svg class="i12"><use href="#arrow"/></svg>Click icons on Style toolbar to create curves and surfaces.</p>
  <div class="right">
    <span class="vsep"></span><span class="vsep"></span>
    <button class="combo" aria-label="Find in model"><svg class="i16"><use href="#binoc"/></svg><svg class="caret"><use href="#caret"/></svg></button>
    <span class="vsep"></span>
    <button class="combo" aria-label="Selection region"><svg class="i16 flat"><use href="#marquee"/></svg><svg class="caret"><use href="#caret"/></svg></button>
    <button class="combo" aria-label="Geometry pick" disabled><svg class="i16"><use href="#pick"/></svg></button>
    <div class="choose"><select aria-label="Selection filter"><option>Style</option></select><span class="arrow"><svg class="caret"><use href="#caret"/></svg></span></div>
  </div>
</footer>
</body>
</html>
```
FILE: styles.css
```css
* { box-sizing: border-box; }

body {
  margin: 0;
  min-height: 100vh;
  display: flex;
  flex-direction: column;
  font-family: "Open Sans", "Noto Sans", sans-serif;
  font-size: 12px;
  line-height: 16px;
  color: #3f4446;
  background: #f8faf9;
}

button {
  display: flex;
  align-items: center;
  justify-content: center;
  padding: 0;
  border: 0;
  background: none;
  font: inherit;
  color: inherit;
}

a { color: inherit; text-decoration: none; }
svg { display: block; flex: none; }
ul { list-style: none; margin: 0; padding: 0; }
input { border: 0; outline: 0; background: none; font: inherit; min-width: 0; padding: 0 4px; }

.sprite { position: absolute; width: 0; height: 0; }
.i16 { width: 16px; height: 16px; }
.i14 { width: 14px; height: 14px; }
.i12 { width: 12px; height: 12px; }
.i8 { width: 8px; height: 8px; }
.i16.flat { height: 12px; }
.w32h24 { width: 32px; height: 24px; }
.w32h14 { width: 32px; height: 14px; }
.w32h30 { width: 32px; height: 30px; }
.w32h32 { width: 32px; height: 32px; }
.w28h20 { width: 28px; height: 20px; }
.w20h16 { width: 20px; height: 16px; }
.caret { width: 8px; height: 5px; display: inline-block; color: #555; }
.caret.dim { color: #9ea4a4; }

/* Title bar */
.titlebar {
  display: grid;
  grid-template-columns: 1fr auto 1fr;
  align-items: center;
  height: 28px;
  background: #dae0e0;
}
.quick { display: flex; align-items: center; padding-left: 8px; }
.logo { width: 59px; padding-left: 4px; font-family: "DejaVu Sans", sans-serif; font-size: 17px; line-height: 24px; color: #4d5557; display: flex; }
.logo sup { font-size: 8px; line-height: 16px; }
.qb { width: 24px; height: 24px; }
.qb.wide { width: 38px; gap: 6px; }
.qsep { width: 1px; height: 24px; background: #aab0b0; }
.title { margin: 0; font-size: 13px; font-weight: 400; }
.winctl { display: flex; justify-content: flex-end; gap: 15px; padding-right: 11px; }

/* Ribbon tabs */
.tabs { display: flex; justify-content: space-between; height: 27px; background: #3d4648; color: #fff; font-size: 13px; }
.tablist { display: grid; grid-template-columns: 59px 84px 93px 134px 98px 79px 74px 149px 127px 71px; }
.tablist a { display: flex; align-items: center; justify-content: center; }
.tablist a:nth-child(9) { padding-right: 8px; }
.tablist .file { background: linear-gradient(#5ccf3a, #46a42d); }
.tablist .active { background: #f7f9fc; color: #3f4446; font-style: italic; }
.finder { display: flex; align-items: flex-start; padding-right: 8px; }
.bare { height: 24px; gap: 10px; }
.bare .caret { color: #fff; }
.up { margin-right: 6px; height: 18px; }
.search { display: flex; align-items: center; width: 232px; height: 23px; margin-top: 2px; padding-right: 2px; background: #fff; border: 1px solid #a9bbbf; }
.search input { flex: 1; }
.findbtn { width: 24px; height: 25px; margin: 0 6px 0 2px; background: #dfdfe3; border: 1px solid #b5b5b9; }
.help { margin-left: 12px; font-size: 14px; font-weight: 700; }

/* Ribbon */
.ribbon { display: flex; height: 107px; padding-top: 2px; background: #f7f9fc; border-bottom: 1px solid #a9bbbf; }
.group { position: relative; display: flex; flex-direction: column; height: 102px; border-right: 1px solid #a8adaf; }
.tools { display: grid; height: 82px; align-items: start; }
.label { display: flex; align-items: center; justify-content: center; gap: 4px; height: 20px; padding-top: 3px; }
.col { display: grid; grid-template-rows: 27px 26px 26px; }
.cmd { justify-content: flex-start; gap: 4px; white-space: nowrap; height: 24px; }
.cmd:disabled { color: #a3a7a9; }
.big { display: flex; flex-direction: column; justify-content: flex-start; height: 80px; line-height: 15px; }
.big .pic { display: flex; align-items: center; justify-content: center; height: 40px; margin-bottom: 5px; }
.big .caret { vertical-align: 2px; }
.hot { border: 1px solid #7fd0f5; }
.hot .pic { align-self: stretch; height: 40px; margin-bottom: 4px; background: #cdf0fd; border-bottom: 1px solid #7fd0f5; }
.g-ops { width: 111px; padding-left: 7px; }
.g-plane { width: 67px; }
.g-curve { width: 292px; padding-left: 3px; }
.g-curve .tools { grid-template-columns: 40px 115px auto; }
.g-curve .col { padding-left: 4px; }
.g-surf { width: 169px; }
.g-surf .tools { grid-template-columns: 53px auto; }
.g-surf .big { padding-left: 2px; }
.g-surf .pic { height: 38px; margin-bottom: 7px; }
.g-surf .cmd { gap: 5px; }
.g-ana { width: 385px; }
.g-ana .tools { grid-template-columns: 67px 90px 122px auto; }
.g-ana .pic { height: 38px; margin-bottom: 7px; }
.g-close { width: 91px; }
.g-close .tools { grid-template-columns: 46px 38px; }
.cursor { position: absolute; left: 31px; top: 39px; width: 28px; height: 42px; }

/* Work area */
.work { flex: 1; display: flex; }
.side { width: 266px; flex: none; border-right: 3px solid #d9dfdf; background: #f8faf9; }
.sidetabs { display: flex; height: 26px; background: #d9dfdf; }
.sidetabs button { width: 32px; }
.sidetabs .on { background: #f8faf9; padding-left: 2px; }
.treebar { display: flex; align-items: center; height: 32px; padding-left: 14px; }
.treebar button { width: 24px; height: 24px; }
.treebar button:first-child { width: 15px; justify-content: flex-start; }
.tri { width: 9px; height: 7px; color: #777; }
.grip { width: 2px; height: 14px; margin-left: 6px; background: repeating-linear-gradient(#999 0 2px, transparent 2px 4px); }
.treebar .gapl { margin-left: 20px; }
.treebar .more { width: 30px; }
.treebar .settings { width: 20px; }
.pressed { width: 24px; height: 24px; background: #dedfe2; border: 1px solid #b3b3b6; }
.vsep { width: 1px; height: 24px; margin: 0 4px; background: #b0b3b4; }
.filter { display: flex; align-items: center; height: 27px; padding-left: 12px; }
.filter .box { display: flex; align-items: center; width: 183px; height: 27px; margin: 0 6px 0 4px; padding-right: 5px; background: #fff; border: 1px solid #9fb0b5; }
.filter input { flex: 1; }
.filter .box button { width: 8px; }
.filter > button { margin-right: 11px; }
.tree { padding: 5px 0 0 19px; font-family: "Noto Sans", "Open Sans", sans-serif; font-size: 11px; }
.tree li { display: flex; align-items: center; height: 18px; gap: 4px; }
.tree .root { margin-left: -8px; gap: 6px; }
.twig {
  width: 8px;
  height: 18px;
  background:
    linear-gradient(#b5b9b9, #b5b9b9) 0 0 / 1px 100% no-repeat,
    linear-gradient(#b5b9b9, #b5b9b9) 0 9px / 8px 1px no-repeat;
}
.twig.last { background-size: 1px 9px, 8px 1px; }
.twig.open { display: flex; align-items: center; background: none; }
.fresh { display: flex; align-items: center; gap: 1px; }
.insert { height: 8px; margin: 3px 5px 0 11px; border: solid #58bd3c; border-width: 0 2px; background: linear-gradient(#58bd3c, #58bd3c) 0 3px / 100% 2px no-repeat; }
.tree.after { padding-top: 3px; }
.split { height: 3px; margin: 166px 5px 0 8px; background: #d7dddd; }
.treebar.second + .tree { padding-top: 1px; }

.canvas { flex: 1; min-width: 0; background: #e8e9ed; }
.viewbar { display: flex; width: max-content; height: 32px; margin: 7px auto 0; padding: 0 2px; background: #fafbfc; border: 1px solid #a3a3a6; align-items: center; }
.viewbar button { width: 26px; height: 26px; }
.viewbar .drop { background: linear-gradient(135deg, transparent 50%, #777 50%) 21px 20px / 4px 4px no-repeat; }
.model { width: 100%; max-width: 894px; margin: 159px auto 0; }

/* Status bar */
.status { display: flex; align-items: center; height: 34px; padding-left: 6px; background: #f8faf9; border-top: 1px solid #a9bbbf; }
.status button { height: 24px; width: 22px; margin-right: 4px; }
.status > .vsep { margin: 0 3px; }
.msg { display: flex; align-items: center; gap: 1px; margin: 0; font-family: "Noto Sans", "Open Sans", sans-serif; font-size: 11px; }
.right { display: flex; align-items: center; margin-left: auto; padding-right: 18px; }
.right .vsep { margin: 0 4px 0 0; height: 26px; }
.status .combo { width: auto; gap: 7px; margin: 0 6px 0 2px; }
.choose { display: grid; grid-template-columns: 1fr 16px; width: 165px; height: 24px; margin-left: 88px; border: 1px solid #aaadae; }
.choose select { grid-area: 1 / 1 / 2 / 3; appearance: none; border: 0; padding: 0 7px; background: none; font: inherit; color: inherit; }
.choose .arrow { grid-area: 1 / 2; display: flex; align-items: center; justify-content: center; border-left: 1px solid #aaadae; pointer-events: none; }
```
